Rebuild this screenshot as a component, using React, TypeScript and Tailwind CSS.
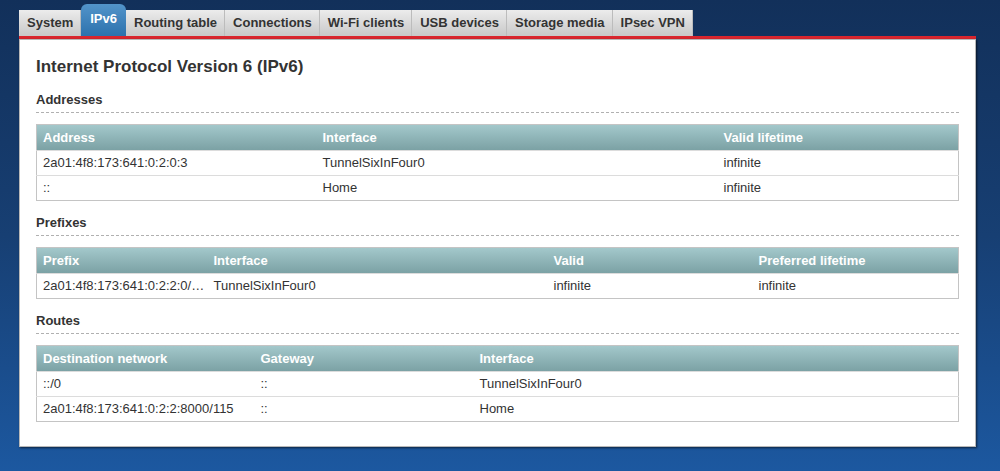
const tabs = [
  "System",
  "IPv6",
  "Routing table",
  "Connections",
  "Wi-Fi clients",
  "USB devices",
  "Storage media",
  "IPsec VPN",
];

type Section = {
  title: string;
  widths: string[];
  head: string[];
  rows: string[][];
};

const sections: Section[] = [
  {
    title: "Addresses",
    widths: ["w-[280px]", "w-[401px]", ""],
    head: ["Address", "Interface", "Valid lifetime"],
    rows: [
      ["2a01:4f8:173:641:0:2:0:3", "TunnelSixInFour0", "infinite"],
      ["::", "Home", "infinite"],
    ],
  },
  {
    title: "Prefixes",
    widths: ["w-[171px]", "w-[340px]", "w-[205px]", ""],
    head: ["Prefix", "Interface", "Valid", "Preferred lifetime"],
    rows: [["2a01:4f8:173:641:0:2:2:0/…", "TunnelSixInFour0", "infinite", "infinite"]],
  },
  {
    title: "Routes",
    widths: ["w-[218px]", "w-[219px]", ""],
    head: ["Destination network", "Gateway", "Interface"],
    rows: [
      ["::/0", "::", "TunnelSixInFour0"],
      ["2a01:4f8:173:641:0:2:2:8000/115", "::", "Home"],
    ],
  },
];

function DataTable({ section }: { section: Section }) {
  return (
    <table className="w-full table-fixed border-collapse border border-[#c4c4c4] text-[13px]">
      <thead>
        <tr className="h-[26px] bg-linear-to-b from-[#a3c8cb] to-[#7aa0a3]">
          {section.head.map((h, i) => (
            <th
              key={h}
              className={`${section.widths[i]} pl-[6px] pr-[2px] text-left font-bold text-white`}
            >
              {h}
            </th>
          ))}
        </tr>
      </thead>
      <tbody>
        {section.rows.map((row, r) => (
          <tr key={r} className="h-[25px] border-t border-[#dcdcdc] bg-white">
            {row.map((cell, c) => (
              <td key={c} className="overflow-hidden whitespace-nowrap pl-[6px] pr-[2px] text-[#333]">
                {cell}
              </td>
            ))}
          </tr>
        ))}
      </tbody>
    </table>
  );
}

export default function App() {
  return (
    <main className="h-[471px] w-full bg-linear-to-b from-[#12305a] via-[#173f73] to-[#1c58a0] pl-[19px] pt-[4px] font-['Liberation_Sans',Arial,sans-serif]">
      <nav className="flex items-end">
        {tabs.map((t) =>
          t === "IPv6" ? (
            <div
              key={t}
              className="flex h-[32px] items-start rounded-t-[6px] bg-linear-to-b from-[#5294ca] to-[#2c72ad] px-[9px] pt-[5px] text-[13px] font-bold text-white"
            >
              {t}
            </div>
          ) : (
            <div
              key={t}
              className="flex h-[26px] items-center border-r border-[#bcbcbc] bg-linear-to-b from-[#ececec] to-[#c8c8c8] pl-[8px] pr-[7px] text-[13px] font-bold text-[#333]"
            >
              {t}
            </div>
          )
        )}
      </nav>

      <div className="w-[957px] border-t-[3px] border-[#d9262e]">
        <section className="h-[408px] border border-[#b8b8b8] bg-white px-[16px] pt-[17px] shadow-[1px_1px_2px_rgba(0,0,0,0.6)]">
          <h1 className="h-[20px] text-[17px] font-bold leading-[20px] text-[#333]">
            Internet Protocol Version 6 (IPv6)
          </h1>
          {sections.map((s, i) => (
            <div key={s.title} className={i === 0 ? "mt-[15px]" : "mt-[14px]"}>
              <h2 className="h-[21px] border-b border-dashed border-[#b0b0b0] pb-[4px] text-[13px] font-bold leading-[16px] text-[#333]">
                {s.title}
              </h2>
              <div className="mt-[11px]">
                <DataTable section={s} />
              </div>
            </div>
          ))}
        </section>
      </div>
    </main>
  );
}
